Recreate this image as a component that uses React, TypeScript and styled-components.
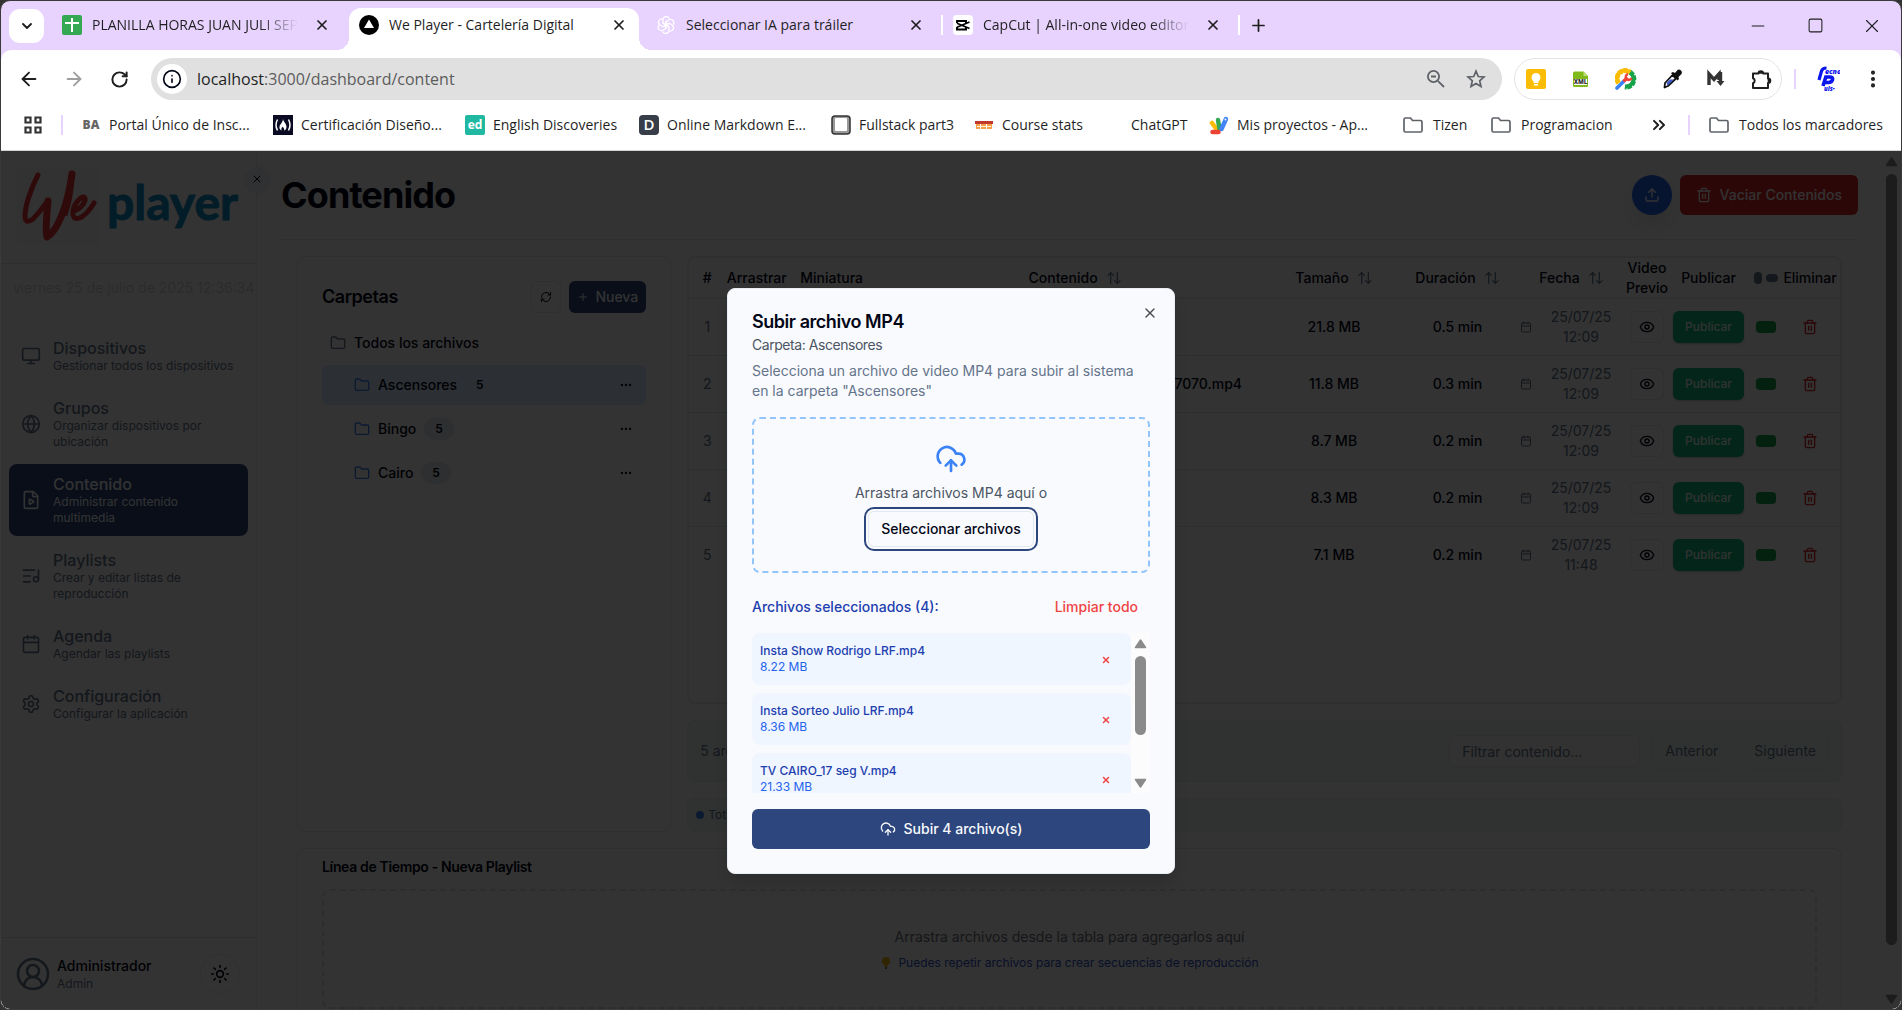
import React from "react";
import styled, { createGlobalStyle, css } from "styled-components";
import {
  ArrowLeft, ArrowRight, RotateCw, Info, X, Plus, ChevronDown, ChevronsRight, Minus, Square,
  Folder, Monitor, Globe, FileVideo, ListMusic, Calendar, Settings, CircleUserRound, Sun, RefreshCw, Ellipsis,
  ArrowUpDown, Eye, Trash2, Upload, CloudUpload, EllipsisVertical,
} from "lucide-react";

const ui = `Inter, "Liberation Sans", sans-serif`;
const system = `"Open Sans", "Noto Sans", sans-serif`;

const GlobalStyle = createGlobalStyle`
  *, *::before, *::after { box-sizing: border-box; }
  html, body { margin: 0; height: 100%; background: #333; }
  body { font-family: ${ui}; font-size: 14px; line-height: 20px; color: #020617; overflow: hidden; }
  h1, h2, h3, p, ul { margin: 0; padding: 0; }
  ul { list-style: none; }
  button { font: inherit; color: inherit; background: none; border: 0; padding: 0; cursor: pointer; }
  a { color: inherit; text-decoration: none; }
  svg { display: block; flex: none; }
`;

const Window = styled.div`
  display: flex;
  flex-direction: column;
  height: 100vh;
  border: 1px solid #3a3a3a;
  border-radius: 10px;
  overflow: hidden;
  background: #e8d3ff;
`;

/* ---------- browser frame ---------- */

const center = css`
  display: flex;
  align-items: center;
  justify-content: center;
`;

const TabStrip = styled.header`
  display: flex;
  align-items: center;
  flex: none;
  height: 49px;
  padding-left: 8px;
  font: 14px/20px ${system};
  color: #1f1f1f;
`;

const TabSearch = styled.button`
  ${center};
  width: 35px;
  height: 34px;
  margin: 0 8px 0 0;
  border-radius: 11px;
  background: #fff;
`;

const Tab = styled.div<{ $active?: boolean; $line?: boolean }>`
  position: relative;
  display: flex;
  align-items: center;
  gap: 10px;
  width: 290px;
  height: 42px;
  margin: 7px 7px 0 0;
  padding: 0 10px 8px;
  border-radius: 12px 12px 0 0;
  background: ${(p) => (p.$active ? "#fff" : "transparent")};
  ${(p) => p.$active && css`
    &::before, &::after {
      content: "";
      position: absolute;
      bottom: 0;
      width: 12px;
      height: 12px;
    }
    &::before { left: -12px; background: radial-gradient(circle at 0 0, transparent 12px, #fff 12px); }
    &::after { right: -12px; background: radial-gradient(circle at 100% 0, transparent 12px, #fff 12px); }
  `}
  ${(p) => p.$line && css`
    &::after {
      content: "";
      position: absolute;
      right: -7px;
      top: 7px;
      width: 2px;
      height: 20px;
      background: #fff;
    }
  `}
`;

const TabTitle = styled.span<{ $fade?: boolean }>`
  flex: 1;
  overflow: hidden;
  white-space: nowrap;
  ${(p) => p.$fade && css`mask-image: linear-gradient(to right, #000 80%, transparent 98%);`}
`;

const IconButton = styled.button<{ $size?: number; $color?: string }>`
  ${center};
  flex: none;
  width: ${(p) => p.$size ?? 20}px;
  height: ${(p) => p.$size ?? 20}px;
  color: ${(p) => p.$color ?? "#1f1f1f"};
`;

const WindowButtons = styled.div`
  display: flex;
  gap: 37px;
  margin-left: auto;
  padding-right: 19px;
`;

const Toolbar = styled.div`
  display: flex;
  align-items: center;
  flex: none;
  height: 58px;
  padding: 0 18px 0 17px;
  border-radius: 10px 10px 0 0;
  background: #fff;
`;

const NavButtons = styled.div`
  display: flex;
  gap: 23px;
  margin-right: 21px;
`;

const Omnibox = styled.form`
  display: flex;
  align-items: center;
  flex: 1;
  height: 42px;
  padding: 0 16px 0 6px;
  border-radius: 21px;
  background: #e0e0e0;
`;

const SiteInfo = styled.button`
  ${center};
  width: 30px;
  height: 30px;
  margin-right: 10px;
  border-radius: 50%;
  background: #fff;
`;

const Address = styled.div`
  flex: 1;
  font: 16px/24px ${system};
  color: #5c5c5c;
  b { font-weight: 400; color: #1f1f1f; }
`;

const OmniActions = styled.div`
  display: flex;
  gap: 20px;
`;

const Extensions = styled.div`
  display: flex;
  align-items: center;
  justify-content: space-between;
  width: 268px;
  height: 42px;
  margin: 0 12px;
  padding: 0 9px 0 11px;
  border: 1px solid #e3e3e3;
  border-radius: 21px;
`;

const Divider = styled.i<{ $gap: number }>`
  width: 2px;
  height: 20px;
  margin: 0 ${(p) => p.$gap}px;
  background: #e8d3ff;
`;

const Profile = styled.button`
  margin: 0 23px 0 20px;
`;

const Bookmarks = styled.nav`
  display: flex;
  align-items: center;
  flex: none;
  height: 43px;
  padding: 0 18px 8px 22px;
  border-bottom: 1px solid #cfd4d2;
  background: #fff;
  font: 14px/20px ${system};
  color: #1f1f1f;
`;

const Bookmark = styled.a<{ $width: number; $folder?: boolean }>`
  display: flex;
  align-items: center;
  gap: ${(p) => (p.$folder ? 10 : 8)}px;
  flex: none;
  width: ${(p) => p.$width}px;
  white-space: nowrap;
`;

const Blank = styled.span`
  width: 20px;
  height: 20px;
`;

const Push = styled.span`
  margin-left: auto;
`;

/* ---------- application ---------- */

const Page = styled.div`
  position: relative;
  display: flex;
  flex: 1;
  min-height: 0;
  background: #fcfcfc;
`;

const Sidebar = styled.aside`
  position: relative;
  display: flex;
  flex-direction: column;
  flex: none;
  width: 256px;
  border-right: 1px solid #e8e8e8;
  background: #fff;
`;

const Brand = styled.div`
  display: flex;
  align-items: center;
  gap: 8px;
  height: 113px;
  padding: 0 16px 2px;
  border-bottom: 1px solid #e0e2e4;
`;

const BrandMark = styled.svg`
  background: #f8f8f8;
`;

const BrandName = styled.span`
  font: 700 48px/48px Lato, sans-serif;
  color: #0b8fc9;
  padding-bottom: 8px;
  -webkit-text-stroke: 1px #0b8fc9;
`;

const Collapse = styled.button`
  ${center};
  position: absolute;
  top: 16px;
  right: -13px;
  width: 24px;
  height: 24px;
  border-radius: 50%;
  background: #f1f5f9;
  box-shadow: 0 1px 3px rgba(0, 0, 0, 0.1);
`;

const Clock = styled.p`
  padding: 14px 12px 30px;
  white-space: nowrap;
  color: #d8d8d8;
`;

const Menu = styled.nav`
  display: flex;
  flex-direction: column;
  gap: 4px;
  flex: 1;
  padding: 0 8px;
`;

const MenuItem = styled.a<{ $active?: boolean }>`
  display: flex;
  align-items: center;
  gap: 12px;
  padding: 10px 12px;
  border-radius: 8px;
  background: ${(p) => (p.$active ? "#2e467e" : "transparent")};
  color: ${(p) => (p.$active ? "#f8fafc" : "#64748b")};
`;

const MenuTitle = styled.span`
  display: block;
  font-size: 16px;
  font-weight: 500;
`;

const Small = styled.span<{ $strong?: boolean }>`
  display: block;
  font-size: 12px;
  line-height: 16px;
  font-weight: ${(p) => (p.$strong ? 500 : 400)};
`;

const UserBar = styled.footer`
  display: flex;
  align-items: center;
  gap: 6px;
  padding: 16px 16px 15px 14px;
  border-top: 1px solid #dcdfe2;
  color: #64748b;
`;

const UserName = styled.div`
  flex: 1;
  strong { display: block; font-weight: 500; color: #020617; }
`;

const ThemeButton = styled.button`
  ${center};
  width: 40px;
  height: 40px;
  border: 1px solid #e6eaee;
  border-radius: 50%;
  color: #020617;
`;

const Main = styled.main`
  flex: 1;
  min-width: 0;
  padding: 24px 24px 0;
  overflow: hidden;
`;

const PageHeader = styled.div`
  display: flex;
  align-items: center;
  gap: 8px;
  padding-bottom: 24px;
  border-bottom: 1px solid #ebebeb;
`;

const PageTitle = styled.h1`
  flex: 1;
  font-size: 36px;
  line-height: 40px;
  font-weight: 700;
  letter-spacing: -0.025em;
`;

const UploadButton = styled.button`
  ${center};
  width: 40px;
  height: 40px;
  border-radius: 50%;
  background: #2563eb;
  color: #fff;
  box-shadow: 0 10px 15px -3px rgba(0, 0, 0, 0.1);
`;

const Danger = styled.button`
  ${center};
  gap: 8px;
  height: 40px;
  padding: 0 16px;
  border-radius: 6px;
  background: #dc2626;
  color: #f8fafc;
  font-weight: 500;
`;

const Body = styled.div`
  display: grid;
  grid-template-columns: repeat(4, minmax(0, 1fr));
  gap: 16px;
  padding: 16px 16px 0;
`;

const Card = styled.section<{ $wide?: boolean }>`
  grid-column: ${(p) => (p.$wide ? "1 / -1" : "auto")};
  padding: ${(p) => (p.$wide ? "8px 24px" : "24px")};
  border: 1px solid #e6e8ea;
  border-radius: 8px;
  background: #fdfdfd;
`;

const FolderHead = styled.div`
  display: flex;
  align-items: center;
  gap: 8px;
  margin-bottom: 12px;
  h2 { flex: 1; font-size: 18px; line-height: 28px; font-weight: 600; letter-spacing: -0.025em; }
`;

const Outline = styled.button<{ $w?: number; $h?: number }>`
  ${center};
  width: ${(p) => (p.$w ? `${p.$w}px` : "auto")};
  height: ${(p) => p.$h ?? 32}px;
  padding: ${(p) => (p.$w ? 0 : "0 12px")};
  border: 1px solid #e8eaed;
  border-radius: 6px;
`;

const NewFolder = styled.button`
  ${center};
  gap: 6px;
  height: 32px;
  padding: 0 8px;
  border-radius: 6px;
  background: #2e467e;
  color: #f8fafc;
  font-weight: 500;
`;

const FolderRow = styled.li<{ $root?: boolean; $active?: boolean }>`
  display: flex;
  align-items: center;
  gap: 8px;
  height: ${(p) => (p.$root ? 36 : 40)}px;
  margin-bottom: 4px;
  padding: ${(p) => (p.$root ? "0 8px" : "0 13px 0 32px")};
  border-radius: 6px;
  background: ${(p) => (p.$active ? "#dbeafe" : "transparent")};
  font-weight: 500;
  > svg { color: ${(p) => (p.$root ? "#64748b" : "#3b82f6")}; }
`;

const Count = styled.span<{ $active?: boolean }>`
  padding: 3px 11px;
  border-radius: 11px;
  background: ${(p) => (p.$active ? "transparent" : "#e6ebf2")};
  font-size: 12px;
  line-height: 16px;
  font-weight: 600;
`;

const More = styled.button`
  margin-left: auto;
`;

const Right = styled.div`
  grid-column: span 3;
  display: flex;
  flex-direction: column;
  gap: 16px;
`;

const TableBox = styled.div`
  height: 448px;
  border: 2px solid #eaecee;
  border-radius: 8px;
  background: #fdfdfd;
`;

const Table = styled.table`
  width: 100%;
  table-layout: fixed;
  border-collapse: collapse;
  text-align: center;
  th, td { padding: 0; border-bottom: 1px solid #e2e4e7; }
  tbody tr:last-child td { border-bottom: 0; }
  th { height: 40px; font-weight: 500; white-space: nowrap; }
  td { height: 57px; font-weight: 500; }
`;

const Th = styled.div<{ $wrap?: boolean; $left?: boolean }>`
  display: flex;
  align-items: center;
  justify-content: ${(p) => (p.$left ? "flex-start" : "center")};
  gap: 8px;
  padding-left: ${(p) => (p.$left ? 12 : 0)}px;
  white-space: ${(p) => (p.$wrap ? "normal" : "nowrap")};
  svg { color: #64748b; }
`;

const IndexCell = styled.td`
  && { font-weight: 400; color: #64748b; }
`;

const NameCell = styled.td`
  && { text-align: right; padding-right: 26px; }
`;

const DateBox = styled.div`
  display: flex;
  align-items: center;
  gap: 18px;
  padding-left: 5px;
  font-weight: 400;
  color: #64748b;
  span { width: 62px; }
`;

const Centered = styled.div`
  ${center};
  gap: 4px;
`;

const Publish = styled.button`
  width: 71px;
  height: 32px;
  border-radius: 6px;
  background: #10b981;
  color: #f0fff8;
  font-size: 12px;
  font-weight: 500;
  box-shadow: 0 1px 2px rgba(0, 0, 0, 0.2);
`;

const Pill = styled.i<{ $w: number; $h: number; $color: string }>`
  width: ${(p) => p.$w}px;
  height: ${(p) => p.$h}px;
  border-radius: 4px;
  background: ${(p) => p.$color};
`;

const Pager = styled.div`
  display: flex;
  align-items: center;
  gap: 10px;
  height: 62px;
  padding: 0 12px;
  border: 1px solid #e9eeec;
  border-radius: 8px;
  background: #f0faf6;
  color: #64748b;
  > span { flex: 1; }
`;

const Filter = styled.input`
  width: 191px;
  height: 32px;
  margin-right: 2px;
  padding: 0 12px;
  border: 1px solid #e2e6e4;
  border-radius: 6px;
  background: #f8fafa;
  font: 14px/20px ${ui};
  &::placeholder { color: #64748b; opacity: 1; }
`;

const Totals = styled.div`
  display: flex;
  align-items: center;
  gap: 4px;
  height: 34px;
  padding: 0 8px;
  border: 1px solid #e9eeec;
  border-radius: 8px;
  background: #f0faf6;
  color: #64748b;
`;

const Dot = styled.i`
  width: 8px;
  height: 8px;
  border-radius: 50%;
  background: #3b82f6;
`;

const TimelineTitle = styled.h2`
  margin-bottom: 12px;
  font-size: 14px;
  line-height: 20px;
  font-weight: 600;
  letter-spacing: -0.025em;
`;

const Timeline = styled.div`
  display: flex;
  flex-direction: column;
  align-items: center;
  gap: 8px;
  padding: 36px;
  border: 2px dashed #e0e2e6;
  border-radius: 8px;
  color: #6b7280;
`;

const Tip = styled.p`
  display: flex;
  align-items: center;
  gap: 6px;
  font-size: 12px;
  line-height: 16px;
  color: #2f54c8;
`;

const ScrollRail = styled.div<{ $background: string }>`
  display: flex;
  flex-direction: column;
  align-items: center;
  justify-content: space-between;
  flex: none;
  width: 19px;
  padding: 6px 0 5px;
  background: ${(p) => p.$background};
`;

const Thumb = styled.i<{ $share: number }>`
  width: 11px;
  height: ${(p) => p.$share}%;
  margin-top: 7px;
  margin-bottom: auto;
  border-radius: 6px;
  background: #8b8b8b;
`;

/* ---------- dialog ---------- */

const Overlay = styled.div`
  ${center};
  position: absolute;
  inset: 0;
  padding-top: 2px;
  background: rgba(0, 0, 0, 0.8);
`;

const Dialog = styled.div`
  position: relative;
  width: 448px;
  padding: 24px;
  border: 1px solid #e9eef4;
  border-radius: 8px;
  background: #f9fafd;
  box-shadow: 0 10px 15px -3px rgba(0, 0, 0, 0.15);
`;

const Close = styled.button`
  position: absolute;
  top: 16px;
  right: 16px;
  color: #4a4c52;
`;

const DialogHead = styled.div`
  margin-bottom: 6px;
  font-size: 18px;
  letter-spacing: -0.025em;
`;

const DialogTitle = styled.h2`
  margin-bottom: 4px;
  font-size: 18px;
  line-height: 18px;
  font-weight: 600;
`;

const DialogFolder = styled.p`
  font-size: 14px;
  color: #4b5563;
`;

const Description = styled.p`
  margin-bottom: 16px;
  color: #64748b;
`;

const DropZone = styled.div`
  display: flex;
  flex-direction: column;
  align-items: center;
  gap: 8px;
  margin-bottom: 16px;
  padding: 24px;
  border: 2px dashed #93c5fd;
  border-radius: 8px;
  color: #4b5563;
  svg { color: #3b82f6; }
`;

const Pick = styled.button`
  height: 36px;
  padding: 0 12px;
  border: 1px solid #e2e8f0;
  border-radius: 6px;
  outline: 2px solid #2e467e;
  outline-offset: 2px;
  font-weight: 500;
  color: #020617;
`;

const SelectedHead = styled.div`
  display: flex;
  align-items: center;
  justify-content: space-between;
  height: 36px;
  margin-bottom: 8px;
  h3 { font-size: 14px; font-weight: 500; color: #1e40af; }
`;

const Clear = styled.button`
  height: 36px;
  padding: 0 12px;
  font-weight: 500;
  color: #ef4444;
`;

const FileArea = styled.div`
  display: flex;
  height: 160px;
  margin-bottom: 16px;
`;

const FileList = styled.ul`
  display: flex;
  flex-direction: column;
  gap: 8px;
  flex: 1;
  overflow: hidden;
`;

const FileRow = styled.li`
  display: flex;
  align-items: center;
  justify-content: space-between;
  flex: none;
  height: 52px;
  padding: 0 20px 0 8px;
  border-radius: 8px;
  background: #eff6ff;
  color: #2563eb;
  ${Small}:first-child { color: #1e40af; }
`;

const Remove = styled.button`
  color: #ef4444;
  padding-top: 2px;
`;

const Submit = styled.button`
  ${center};
  gap: 8px;
  width: 100%;
  height: 40px;
  border-radius: 6px;
  background: #2e467e;
  color: #f8fafc;
  font-weight: 500;
`;

/* ---------- drawings ---------- */

const SheetIcon = () => (
  <svg width="20" height="20" viewBox="0 0 20 20"><rect width="20" height="20" rx="2" fill="#34a853" /><path d="M9 3h2v4h6v2h-6v8H9V9H3V7h6z" fill="#fff" /></svg>
);
const VercelIcon = () => (
  <svg width="20" height="20" viewBox="0 0 20 20"><circle cx="10" cy="10" r="10" fill="#000" /><path d="M10 4.600l5 8.400H5z" fill="#fff" /></svg>
);
const KnotIcon = () => (
  <svg width="20" height="20" viewBox="0 0 20 20" fill="none" stroke="#fff" strokeWidth="1.300">
    {[0, 60, 120, 180, 240, 300].map((a) => (
      <path key={a} transform={`rotate(${a} 10 10)`} d="M7 8.200V4.800a3.300 3.300 0 0 1 6.300-1.200M7 8.200l3 1.800 3.500-2" />
    ))}
  </svg>
);
const CutIcon = () => (
  <svg width="20" height="20" viewBox="0 0 20 20">
    <rect width="20" height="20" rx="4" fill="#fff" />
    <path d="M4 8V6h9v2.200M4 12v2.500h9V12" fill="none" stroke="#000" strokeWidth="1.900" />
    <path d="M4 8.200l12.500 5.300M4 12.200L16.500 7" fill="none" stroke="#000" strokeWidth="1.700" />
  </svg>
);
const AppsIcon = () => (
  <svg width="20" height="20" viewBox="0 0 20 20" fill="none" stroke="#333" strokeWidth="2.200"><path d="M2.500 2.500h5v5h-5zM12.500 2.500h5v5h-5zM2.500 12.500h5v5h-5zM12.500 12.500h5v5h-5z" /></svg>
);
const Badge = ({ text, bg, fg, size = 12, weight = 700, r = 2 }: { text: string; bg: string; fg: string; size?: number; weight?: number; r?: number }) => (
  <svg width="20" height="20" viewBox="0 0 20 20">
    <rect width="20" height="20" rx={r} fill={bg} />
    <text x="10" y={10 + size * 0.36} textAnchor="middle" fontFamily="Open Sans, sans-serif" fontWeight={weight} fontSize={size} fill={fg}>{text}</text>
  </svg>
);
const FireIcon = () => (
  <svg width="20" height="20" viewBox="0 0 20 20"><rect width="20" height="20" fill="#0a0a23" /><path d="M4.500 4.500q-3 5.500 0 11M15.500 4.500q3 5.500 0 11" stroke="#fff" strokeWidth="1.500" fill="none" /><path d="M10 4c.5 3 3.500 4.500 3.500 8 0 2-1.500 3.500-2.500 3.500 1-2-1-2.500-1-4-1 1-2.500 2.500-1 4-2-.5-3-2-2.500-4 .4-2 3-3.500 3.500-7.500z" fill="#fff" /></svg>
);
const FrameIcon = () => (
  <svg width="20" height="20" viewBox="0 0 20 20"><rect x="1" y="1" width="18" height="18" rx="3" fill="#999" stroke="#333" strokeWidth="1.500" /><rect x="4" y="3" width="12" height="13" rx="1" fill="#fff" /></svg>
);
const CourseIcon = () => (
  <svg width="20" height="20" viewBox="0 0 20 20"><path d="M1 6h18v3H1z" fill="#c0392b" /><path d="M2 9h4v5H2zM7 9h5v5H7zM13 9h5v5h-5z" fill="#f5a04a" /><path d="M3 11.500h14" stroke="#fff2df" /></svg>
);
const ScriptIcon = () => (
  <svg width="20" height="20" viewBox="0 0 20 20" strokeLinecap="round" fill="none" strokeWidth="4.500"><path d="M3 8l4.500 6" stroke="#fbbc04" /><path d="M9 5l1.500 9" stroke="#34a853" /><path d="M17 4l-4.500 10" stroke="#4285f4" /><path d="M3.500 17h6" stroke="#ea4335" /><circle cx="16.500" cy="4.500" r="1" fill="#fff" stroke="none" /></svg>
);
const BookmarkFolder = () => (
  <svg width="20" height="20" viewBox="0 0 20 20" fill="none" stroke="#5f6368" strokeWidth="1.700"><path d="M1 4.500Q1 3 2.500 3h5l2 2.500h8Q19 5.500 19 7v8.500q0 1.500-1.500 1.500h-15Q1 17 1 15.500z" /></svg>
);
const LensIcon = () => (
  <svg width="20" height="20" viewBox="0 0 20 20" fill="none" stroke="currentColor" strokeWidth="1.800"><circle cx="7.500" cy="7.500" r="5.600" /><path d="M11.800 11.800l6.200 6.200M5 7.500h5" /></svg>
);
const StarIcon = () => (
  <svg width="20" height="20" viewBox="0 0 20 20" fill="none" stroke="currentColor" strokeWidth="1.700"><path d="M10 2.200l2.300 5.300 5.700.5-4.300 3.800 1.300 5.700-5-3-5 3 1.300-5.700L2 8l5.700-.5z" /></svg>
);
const KeepIcon = () => (
  <svg width="20" height="20" viewBox="0 0 20 20"><rect width="20" height="20" rx="2" fill="#fbbc04" /><path d="M10 4a4.500 4.500 0 0 0-2.500 8.200V14h5v-1.800A4.500 4.500 0 0 0 10 4zM8 15h4v1.500H8z" fill="#fff" /></svg>
);
const XmlIcon = () => (
  <svg width="20" height="20" viewBox="0 0 20 20"><path d="M2 4q0-1.500 1.500-1.500h9L17 7v9.500q0 1.500-1.500 1.500h-12Q2 18 2 16.500z" fill="#80b918" /><path d="M12.500 2.500L17 7h-4.500z" fill="#b8dc78" /><rect x="3" y="10" width="13" height="6" fill="#fff" /><text x="9.500" y="15.400" textAnchor="middle" fontFamily="Open Sans, sans-serif" fontWeight="800" fontSize="6" fill="#333">XML</text></svg>
);
const GearIcon = () => (
  <svg width="22" height="22" viewBox="0 0 22 22" fill="none">
    <path d="M3.500 15A8 8 0 0 1 15 4.200" stroke="#fbbc04" strokeWidth="5" strokeDasharray="4 1" />
    <path d="M15 4.200A8 8 0 0 1 10 19" stroke="#16a34a" strokeWidth="5" strokeDasharray="4 1" />
    <path d="M4 15A7.500 7.500 0 0 1 15 4.800" stroke="#fbbc04" strokeWidth="4" />
    <path d="M15 4.800A7.500 7.500 0 0 1 10 18.500" stroke="#16a34a" strokeWidth="4" />
    <circle cx="11.500" cy="11" r="5" fill="#fff" />
    <path d="M2 20l6.500-6.500" stroke="#3b82f6" strokeWidth="3.600" strokeLinecap="round" />
    <path d="M8.500 13.500l4-4" stroke="#ef4136" strokeWidth="3.400" />
    <path d="M13 6a3 3 0 1 0 3.500 4" stroke="#ef4136" strokeWidth="2.400" />
  </svg>
);
const DropperIcon = () => (
  <svg width="20" height="20" viewBox="0 0 20 20" strokeLinejoin="round">
    <path d="M3 14l7.500-8 3.500 3.500-8 7.500-3.500 1.500z" fill="#fff" stroke="#111" strokeWidth="1.800" />
    <path d="M4.500 14l3.500-3.500h4L5.500 16.500z" fill="#3a55c8" />
    <path d="M9 4l2-1 2 1 2.500-3q2-1 3.500.5t.5 3.500L16.500 8l.5 2-1.500 1.500z" fill="#111" />
  </svg>
);
const MarkdownIcon = () => (
  <svg width="20" height="20" viewBox="0 0 20 20" fill="none" stroke="#333" strokeWidth="3.400"><path d="M3 16V5l5 5.500L13 5v6" /><path d="M14.500 3v10" /><path d="M10.500 12h8L14.500 17z" fill="#333" stroke="none" /></svg>
);
const ExtensionIcon = () => (
  <svg width="21" height="21" viewBox="0 0 21 21" fill="none" stroke="#1f1f1f" strokeWidth="2" strokeLinejoin="round">
    <path d="M2 4.500h5.500a2.300 2.300 0 0 1 4.600 0H17v5a2.300 2.300 0 0 1 0 4.600v5H2v-4.800a2.700 2.700 0 0 0 0-5z" />
    <path d="M8 3.500h3.500M18 10v3.500" strokeWidth="2.600" />
  </svg>
);
const ProfileIcon = () => (
  <svg width="24" height="26" viewBox="0 0 24 26" fill="#0b16ee" fontFamily="Open Sans, sans-serif" fontStyle="italic" fontWeight="800">
    <path d="M3 14L5.500 5Q6.500 2 10.500 2" fill="none" stroke="#0b16ee" strokeWidth="3.200" />
    <path d="M7 20l2.800-9h4.500q3 .3 2.200 2.800-.8 2.700-4 2.700H9" fill="none" stroke="#0b16ee" strokeWidth="3.600" />
    <text x="9" y="8" fontSize="7">ecno</text>
    <text x="8" y="25" fontSize="6">uls-</text>
  </svg>
);
const CloseSolid = () => <X size={16} strokeWidth={2.600} />;

const WeMark = () => (
  <BrandMark width="82" height="77" viewBox="0 0 82 77" role="img" aria-label="We" fill="none" stroke="#e8343a" strokeLinecap="round" strokeLinejoin="round">
    <path d="M21 7C14 20 8 38 8 48c0 7 4 6 8 3C23 44 28 36 31 33" strokeWidth="5" />
    <path d="M31 33c-1 12-3 28-1 36 9-5 20-27 25-63" strokeWidth="7" />
    <path d="M55 6c1 12-2 27-6 40" strokeWidth="4" />
    <path d="M56 43c7-1 13-9 12-13-2-4-11 5-12 13-1 9 5 9 10 5 4-3 8-8 11-13" strokeWidth="5" />
  </BrandMark>
);
const Arrow = ({ down }: { down?: boolean }) => (
  <svg width="13" height="10" viewBox="0 0 13 10">
    <path d={down ? "M1.500 1.500h10L6.500 9z" : "M1.500 8.500h10L6.500 1z"} fill="#8b8b8b" stroke="#8b8b8b" strokeWidth="1.500" strokeLinejoin="round" />
  </svg>
);
const BulbIcon = () => (
  <svg width="12" height="14" viewBox="0 0 12 14"><path d="M6 1a4 4 0 0 0-2 7.500L5 11h2l1-2.500A4 4 0 0 0 6 1z" fill="#f5b301" /><path d="M5 11h2v2H5z" fill="#777" /></svg>
);

/* ---------- data ---------- */

const bookmarks = [
  { label: "Portal Único de Insc...", width: 192, icon: <Badge text="BA" bg="#fff" fg="#666" weight={800} /> },
  { label: "Certificación Diseño...", width: 192, icon: <FireIcon /> },
  { label: "English Discoveries", width: 174, icon: <Badge text="ed" bg="#20b8a0" fg="#fff" /> },
  { label: "Online Markdown E...", width: 192, icon: <Badge text="D" bg="#373d49" fg="#fff" size={15} weight={600} r={4} /> },
  { label: "Fullstack part3", width: 143, icon: <FrameIcon /> },
  { label: "Course stats", width: 129, icon: <CourseIcon /> },
  { label: "ChatGPT", width: 106, icon: <Blank /> },
  { label: "Mis proyectos - Ap...", width: 194, icon: <ScriptIcon /> },
  { label: "Tizen", width: 88, icon: <BookmarkFolder />, folder: true },
  { label: "Programacion", width: 122, icon: <BookmarkFolder />, folder: true },
];

const menu = [
  { title: "Dispositivos", text: "Gestionar todos los dispositivos", Icon: Monitor },
  { title: "Grupos", text: "Organizar dispositivos por ubicación", Icon: Globe },
  { title: "Contenido", text: "Administrar contenido multimedia", Icon: FileVideo, active: true },
  { title: "Playlists", text: "Crear y editar listas de reproducción", Icon: ListMusic },
  { title: "Agenda", text: "Agendar las playlists", Icon: Calendar },
  { title: "Configuración", text: "Configurar la aplicación", Icon: Settings },
];

const rows = [
  { name: "", size: "21.8 MB", length: "0.5 min", time: "12:09" },
  { name: "7070.mp4", size: "11.8 MB", length: "0.3 min", time: "12:09" },
  { name: "", size: "8.7 MB", length: "0.2 min", time: "12:09" },
  { name: "", size: "8.3 MB", length: "0.2 min", time: "12:09" },
  { name: "", size: "7.1 MB", length: "0.2 min", time: "11:48" },
];

const files = [
  { name: "Insta Show Rodrigo LRF.mp4", size: "8.22 MB" },
  { name: "Insta Sorteo Julio LRF.mp4", size: "8.36 MB" },
  { name: "TV CAIRO_17 seg V.mp4", size: "21.33 MB" },
];

const columns = [36, 63, 94, 0, 132, 115, 113, 38, 85, 29, 60];

const Sort = () => <ArrowUpDown size={16} strokeWidth={1.800} />;

function Browser() {
  return (
    <>
      <TabStrip>
        <TabSearch aria-label="Buscar pestañas"><ChevronDown size={16} strokeWidth={2.800} /></TabSearch>
        <Tab><SheetIcon /><TabTitle $fade>PLANILLA HORAS JUAN JULI SEP</TabTitle><IconButton aria-label="Cerrar"><CloseSolid /></IconButton></Tab>
        <Tab $active><VercelIcon /><TabTitle>We Player - Cartelería Digital</TabTitle><IconButton aria-label="Cerrar"><CloseSolid /></IconButton></Tab>
        <Tab $line><KnotIcon /><TabTitle>Seleccionar IA para tráiler</TabTitle><IconButton aria-label="Cerrar"><CloseSolid /></IconButton></Tab>
        <Tab $line><CutIcon /><TabTitle $fade>CapCut | All-in-one video editor</TabTitle><IconButton aria-label="Cerrar"><CloseSolid /></IconButton></Tab>
        <IconButton $size={36} aria-label="Nueva pestaña"><Plus size={19} strokeWidth={2.200} /></IconButton>
        <WindowButtons>
          <IconButton aria-label="Minimizar"><Minus size={20} strokeWidth={1.200} /></IconButton>
          <IconButton aria-label="Maximizar"><Square size={17} strokeWidth={1.500} /></IconButton>
          <IconButton aria-label="Cerrar ventana"><X size={22} strokeWidth={1.200} /></IconButton>
        </WindowButtons>
      </TabStrip>
      <Toolbar>
        <NavButtons>
          <IconButton $size={22} aria-label="Atrás"><ArrowLeft size={22} /></IconButton>
          <IconButton $size={22} $color="#9e9e9e" aria-label="Adelante"><ArrowRight size={22} /></IconButton>
          <IconButton $size={22} aria-label="Recargar"><RotateCw size={19} strokeWidth={2.500} /></IconButton>
        </NavButtons>
        <Omnibox>
          <SiteInfo type="button" aria-label="Información del sitio"><Info size={20} /></SiteInfo>
          <Address><b>localhost</b>:3000/dashboard/content</Address>
          <OmniActions>
            <IconButton type="button" $color="#5f6368" aria-label="Zoom"><LensIcon /></IconButton>
            <IconButton type="button" $color="#5f6368" aria-label="Favorito"><StarIcon /></IconButton>
          </OmniActions>
        </Omnibox>
        <Extensions>
          <KeepIcon /><XmlIcon /><GearIcon /><DropperIcon /><MarkdownIcon /><ExtensionIcon />
        </Extensions>
        <Divider $gap={0} />
        <Profile aria-label="Perfil"><ProfileIcon /></Profile>
        <IconButton aria-label="Menú"><EllipsisVertical size={22} strokeWidth={2.500} /></IconButton>
      </Toolbar>
      <Bookmarks>
        <AppsIcon />
        <Divider $gap={18} />
        {bookmarks.map((b) => <Bookmark key={b.label} href="#" $width={b.width} $folder={b.folder}>{b.icon}{b.label}</Bookmark>)}
        <Push />
        <IconButton aria-label="Más marcadores"><ChevronsRight size={20} strokeWidth={2.400} /></IconButton>
        <Divider $gap={19} />
        <Bookmark href="#" $width={174} $folder><BookmarkFolder />Todos los marcadores</Bookmark>
      </Bookmarks>
    </>
  );
}

function SideMenu() {
  return (
    <Sidebar>
      <Brand><WeMark /><BrandName>player</BrandName></Brand>
      <Collapse aria-label="Contraer menú"><X size={12} /></Collapse>
      <Clock>viernes 25 de julio de 2025 12:36:34</Clock>
      <Menu>
        {menu.map(({ title, text, Icon, active }) => (
          <MenuItem key={title} href="#" $active={active}>
            <Icon size={20} />
            <div><MenuTitle>{title}</MenuTitle><Small>{text}</Small></div>
          </MenuItem>
        ))}
      </Menu>
      <UserBar>
        <CircleUserRound size={36} strokeWidth={1.700} />
        <UserName><strong>Administrador</strong><Small>Admin</Small></UserName>
        <ThemeButton aria-label="Cambiar tema"><Sun size={20} /></ThemeButton>
      </UserBar>
    </Sidebar>
  );
}

function Folders() {
  return (
    <Card>
      <FolderHead>
        <h2>Carpetas</h2>
        <Outline $w={30} aria-label="Actualizar"><RefreshCw size={12} /></Outline>
        <NewFolder><Plus size={12} />Nueva</NewFolder>
      </FolderHead>
      <ul>
        <FolderRow $root><Folder size={16} />Todos los archivos</FolderRow>
        {["Ascensores", "Bingo", "Cairo"].map((name, i) => (
          <FolderRow key={name} $active={i === 0}>
            <Folder size={16} />{name}<Count $active={i === 0}>5</Count>
            <More aria-label={`Opciones de ${name}`}><Ellipsis size={14} /></More>
          </FolderRow>
        ))}
      </ul>
    </Card>
  );
}

function ContentTable() {
  return (
    <TableBox>
      <Table>
        <colgroup>{columns.map((w, i) => <col key={i} style={w ? { width: w } : undefined} />)}</colgroup>
        <thead>
          <tr>
            <th>#</th>
            <th><Th>Arrastrar</Th></th>
            <th><Th $left>Miniatura</Th></th>
            <th><Th>Contenido<Sort /></Th></th>
            <th><Th>Tamaño<Sort /></Th></th>
            <th><Th>Duración<Sort /></Th></th>
            <th><Th>Fecha<Sort /></Th></th>
            <th><Th $wrap>Video Previo</Th></th>
            <th>Publicar</th>
            <th aria-label="Estado"><Centered><Pill $w={8} $h={12} $color="#64748b" /><Pill $w={12} $h={8} $color="#64748b" /></Centered></th>
            <th><Th>Eliminar</Th></th>
          </tr>
        </thead>
        <tbody>
          {rows.map((r, i) => (
            <tr key={i}>
              <IndexCell>{i + 1}</IndexCell>
              <td /><td />
              <NameCell>{r.name}</NameCell>
              <td>{r.size}</td>
              <td>{r.length}</td>
              <td><DateBox><Calendar size={12} /><span>25/07/25 {r.time}</span></DateBox></td>
              <td><Centered><Outline $w={34} aria-label="Ver video"><Eye size={16} /></Outline></Centered></td>
              <td><Publish>Publicar</Publish></td>
              <td><Centered><Pill $w={20} $h={12} $color="#16a34a" /></Centered></td>
              <td><Centered><IconButton $color="#dc2626" aria-label="Eliminar"><Trash2 size={16} /></IconButton></Centered></td>
            </tr>
          ))}
        </tbody>
      </Table>
    </TableBox>
  );
}

function UploadDialog() {
  return (
    <Overlay>
      <Dialog role="dialog" aria-modal="true" aria-labelledby="upload-title">
        <Close aria-label="Cerrar diálogo"><X size={16} /></Close>
        <DialogHead>
          <DialogTitle id="upload-title">Subir archivo MP4</DialogTitle>
          <DialogFolder>Carpeta: Ascensores</DialogFolder>
        </DialogHead>
        <Description>Selecciona un archivo de video MP4 para subir al sistema en la carpeta "Ascensores"</Description>
        <DropZone>
          <CloudUpload size={32} />
          Arrastra archivos MP4 aquí o
          <Pick>Seleccionar archivos</Pick>
        </DropZone>
        <SelectedHead><h3>Archivos seleccionados (4):</h3><Clear>Limpiar todo</Clear></SelectedHead>
        <FileArea>
          <FileList>
            {files.map((f) => (
              <FileRow key={f.name}>
                <div><Small $strong>{f.name}</Small><Small>{f.size}</Small></div>
                <Remove aria-label={`Quitar ${f.name}`}><X size={10} strokeWidth={3.600} /></Remove>
              </FileRow>
            ))}
          </FileList>
          <ScrollRail $background="#fcfcfc"><Arrow /><Thumb $share={53} /><Arrow down /></ScrollRail>
        </FileArea>
        <Submit><CloudUpload size={16} />Subir 4 archivo(s)</Submit>
      </Dialog>
    </Overlay>
  );
}

export default function App() {
  return (
    <Window>
      <GlobalStyle />
      <Browser />
      <Page>
        <SideMenu />
        <Main>
          <PageHeader>
            <PageTitle>Contenido</PageTitle>
            <UploadButton aria-label="Subir archivo"><Upload size={16} /></UploadButton>
            <Danger><Trash2 size={16} />Vaciar Contenidos</Danger>
          </PageHeader>
          <Body>
            <Folders />
            <Right>
              <ContentTable />
              <Pager>
                <span>5 archivos</span>
                <Filter aria-label="Filtrar contenido" placeholder="Filtrar contenido..." />
                <Outline $h={36}>Anterior</Outline>
                <Outline $h={36}>Siguiente</Outline>
              </Pager>
              <Totals><Dot /><Small>Total</Small></Totals>
            </Right>
            <Card $wide>
              <TimelineTitle>Línea de Tiempo - Nueva Playlist</TimelineTitle>
              <Timeline>
                <p>Arrastra archivos desde la tabla para agregarlos aquí</p>
                <Tip><BulbIcon />Puedes repetir archivos para crear secuencias de reproducción</Tip>
              </Timeline>
            </Card>
          </Body>
        </Main>
        <ScrollRail $background="#fcfcfc"><Arrow /><Thumb $share={91} /><Arrow down /></ScrollRail>
        <UploadDialog />
      </Page>
    </Window>
  );
}
